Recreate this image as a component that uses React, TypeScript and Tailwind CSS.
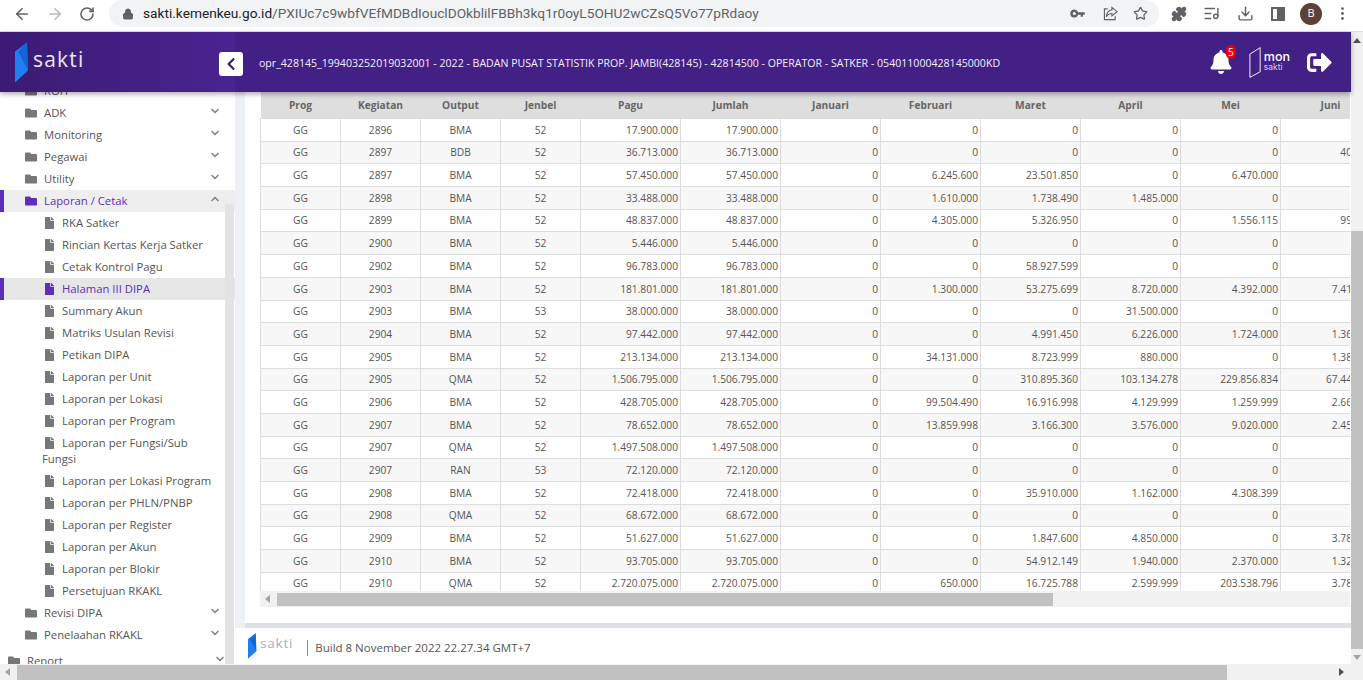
import { ArrowLeft, ArrowRight, RotateCw, Lock, Star, Puzzle, ListMusic, Download, EllipsisVertical, ChevronDown, ChevronUp } from "lucide-react";
import { FaBell, FaFile, FaFolder, FaSignOutAlt, FaChevronLeft } from "react-icons/fa";

type Row = string[];
const raw: Row[] = [
  ["2896","BMA","52","17.900.000","0","0","0","0","0","0"],
  ["2897","BDB","52","36.713.000","0","0","0","0","0","408.000"],
  ["2897","BMA","52","57.450.000","0","6.245.600","23.501.850","0","6.470.000","0"],
  ["2898","BMA","52","33.488.000","0","1.610.000","1.738.490","1.485.000","0","0"],
  ["2899","BMA","52","48.837.000","0","4.305.000","5.326.950","0","1.556.115","990.000"],
  ["2900","BMA","52","5.446.000","0","0","0","0","0","0"],
  ["2902","BMA","52","96.783.000","0","0","58.927.599","0","0","0"],
  ["2903","BMA","52","181.801.000","0","1.300.000","53.275.699","8.720.000","4.392.000","7.410.000"],
  ["2903","BMA","53","38.000.000","0","0","0","31.500.000","0","0"],
  ["2904","BMA","52","97.442.000","0","0","4.991.450","6.226.000","1.724.000","1.360.000"],
  ["2905","BMA","52","213.134.000","0","34.131.000","8.723.999","880.000","0","1.380.000"],
  ["2905","QMA","52","1.506.795.000","0","0","310.895.360","103.134.278","229.856.834","67.440.000"],
  ["2906","BMA","52","428.705.000","0","99.504.490","16.916.998","4.129.999","1.259.999","2.660.000"],
  ["2907","BMA","52","78.652.000","0","13.859.998","3.166.300","3.576.000","9.020.000","2.450.000"],
  ["2907","QMA","52","1.497.508.000","0","0","0","0","0","0"],
  ["2907","RAN","53","72.120.000","0","0","0","0","0","0"],
  ["2908","BMA","52","72.418.000","0","0","35.910.000","1.162.000","4.308.399","0"],
  ["2908","QMA","52","68.672.000","0","0","0","0","0","0"],
  ["2909","BMA","52","51.627.000","0","0","1.847.600","4.850.000","0","3.780.000"],
  ["2910","BMA","52","93.705.000","0","0","54.912.149","1.940.000","2.370.000","1.320.000"],
  ["2910","QMA","52","2.720.075.000","0","650.000","16.725.788","2.599.999","203.538.796","3.780.000"],
];
const heads = ["Prog","Kegiatan","Output","Jenbel","Pagu","Jumlah","Januari","Februari","Maret","April","Mei","Juni"];

function Logo({ className }: { className: string }) {
  return (
    <svg viewBox="0 0 14 40" className={className}>
      <path d="M0 9 L12 0 L13 28 L0 40 Z" fill="#1f7ff0" />
      <path d="M3 9 L12 0 L13 28 Z" fill="#0f5fd0" opacity="0.75" />
    </svg>
  );
}

function Folder({ label, active, open, indent = "pl-[25px] pr-[14px]" }: { label: string; active?: boolean; open?: boolean; indent?: string }) {
  const chevron = "mb-[4px] text-[#888888]";
  return (
    <div className={`relative flex h-[22px] items-center ${indent} ${active ? "bg-[#eeeeee] text-[#5f2eb8]" : "text-[#555555]"}`}>
      {active && <span className="absolute left-0 top-0 h-full w-[4px] bg-[#5f2eb8]" />}
      <FaFolder className={`mr-[7px] h-[12px] w-[12px] shrink-0 ${active ? "text-[#5f2eb8]" : "text-[#777777]"}`} />
      <span className="flex-1 truncate">{label}</span>
      {open ? <ChevronUp size={12} strokeWidth={3.4} className={chevron} /> : <ChevronDown size={12} strokeWidth={3.4} className={chevron} />}
    </div>
  );
}

function Leaf({ label, active }: { label: string; active?: boolean }) {
  return (
    <div className={`relative flex h-[22px] items-center pl-[45px] ${active ? "bg-[#e6e6e6] text-[#5f2eb8]" : "text-[#555555]"}`}>
      {active && <span className="absolute left-0 top-0 h-full w-[4px] bg-[#5f2eb8]" />}
      <FaFile className={`mr-[8px] h-[12px] w-[9px] shrink-0 ${active ? "text-[#5f2eb8]" : "text-[#777777]"}`} />
      <span className="truncate">{label}</span>
    </div>
  );
}

const leavesA = ["RKA Satker","Rincian Kertas Kerja Satker","Cetak Kontrol Pagu"];
const leavesB = ["Summary Akun","Matriks Usulan Revisi","Petikan DIPA","Laporan per Unit","Laporan per Lokasi","Laporan per Program"];
const leavesC = ["Laporan per Lokasi Program","Laporan per PHLN/PNBP","Laporan per Register","Laporan per Akun","Laporan per Blokir","Persetujuan RKAKL"];

export default function App() {
  return (
    <div className="flex h-[680px] w-[1363px] flex-col overflow-hidden bg-white font-['Open_Sans',sans-serif] text-[11.3px]">
      {/* Browser toolbar */}
      <div className="flex h-[32px] shrink-0 items-start border-b border-[#dfe1e5] bg-white text-[#5f6368]">
        <div className="flex h-[27px] items-center">
          <ArrowLeft size={18} strokeWidth={2.2} className="ml-[13px]" />
          <ArrowRight size={18} strokeWidth={2.2} className="ml-[15px] text-[#b8babd]" />
          <RotateCw size={16} strokeWidth={2.4} className="ml-[15px]" />
        </div>
        <div className="ml-[14px] flex h-[27px] w-[1050px] items-center rounded-full bg-[#f1f3f4] pl-[13px] font-['Roboto',sans-serif] text-[13.7px]">
          <Lock size={12} fill="#5f6368" className="mr-[9px]" />
          <span className="flex-1 truncate text-[#5f6368]"><span className="text-[#202124]">sakti.kemenkeu.go.id</span>/PXIUc7c9wbfVEfMDBdIouclDOkblilFBBh3kq1r0oyL5OHU2wCZsQ5Vo77pRdaoy</span>
          <svg viewBox="0 0 16 10" className="mr-[18px] h-[9px] w-[15px]" fill="#5f6368">
            <path fillRule="evenodd" d="M4.5 0.5 A4.5 4.5 0 0 1 8.7 3.5 L16 3.5 L16 6.5 L14 6.5 L14 8.5 L11.5 8.5 L11.5 6.5 L8.7 6.5 A4.5 4.5 0 1 1 4.5 0.5 Z M4.5 3.2 A1.8 1.8 0 1 0 4.5 6.8 A1.8 1.8 0 1 0 4.5 3.2 Z" />
          </svg>
          <svg viewBox="0 0 16 16" className="mr-[15px] h-[15px] w-[15px]" fill="none" stroke="#5f6368" strokeWidth="1.2">
            <path d="M5 3 H1.5 V14.5 H13 V11" />
            <path d="M9.5 1.5 L15 6 L9.5 10.5 V8 C7 8 5 9 3.5 11.5 C4 7.5 6 4.5 9.5 4 Z" />
          </svg>
          <Star size={15} strokeWidth={2} className="mr-[11px]" />
        </div>
        <div className="flex h-[27px] items-center">
          <Puzzle size={16} fill="#5f6368" className="ml-[12px]" />
          <ListMusic size={17} className="ml-[16px]" />
          <Download size={17} className="ml-[17px]" />
          <span className="ml-[17px] flex h-[14px] w-[14px] justify-end border-2 border-[#5f6368]"><span className="h-full w-[6px] bg-[#5f6368]" /></span>
          <span className="ml-[15px] flex h-[22px] w-[22px] items-center justify-center rounded-full bg-[#5d4037] text-[11px] text-white">B</span>
          <EllipsisVertical size={17} className="ml-[12px]" />
        </div>
      </div>

      <div className="flex min-h-0 flex-1">
        <div className="relative flex min-w-0 flex-1 flex-col">
          {/* Header */}
          <div className="z-10 flex h-[60px] shrink-0 items-center bg-[#432086] text-white shadow-[0_2px_5px_rgba(0,0,0,0.35)]">
            <div className="relative flex h-full w-[235px] shrink-0 items-center bg-gradient-to-r from-[#3b1b74] to-[#4a2490] pl-[15px]">
              <Logo className="h-[41px] w-[14px]" />
              <span className="ml-[4px] mb-[5px] text-[21px] tracking-[1.2px] text-[#eae6f4]">sakti</span>
              <button className="absolute left-[219px] top-[20px] flex h-[24px] w-[24px] items-center justify-center rounded-[3px] bg-white text-[#3b1b74]">
                <FaChevronLeft size={14} />
              </button>
            </div>
            <div className="ml-[24px] mt-[3px] flex-1 truncate text-[10.58px] text-[#f2eff8]">
              opr_428145_199403252019032001 - 2022 - BADAN PUSAT STATISTIK PROP. JAMBI(428145) - 42814500 - OPERATOR - SATKER - 054011000428145000KD
            </div>
            <div className="relative mr-[16px]">
              <FaBell size={24} />
              <span className="absolute -right-[3px] -top-[5px] flex h-[14px] w-[10px] items-center justify-center rounded-full bg-[#e60012] text-[10px] leading-none">5</span>
            </div>
            <svg viewBox="0 0 14 34" className="mr-[2px] h-[33px] w-[13px]" fill="none" stroke="white" strokeWidth="1">
              <path d="M1 8 L12 1 L12 27 L1 33 Z" />
            </svg>
            <div className="mr-[17px] flex flex-col font-['Inter',sans-serif] leading-[10px]">
              <span className="text-[12.5px] font-medium">mon</span>
              <span className="text-[8.5px] text-[#d7cfe8]">sakti</span>
            </div>
            <FaSignOutAlt size={25} className="mr-[19px]" />
          </div>

          <div className="flex min-h-0 flex-1">
            {/* Sidebar */}
            <div className="relative w-[235px] shrink-0 overflow-hidden bg-white">
              <div className="-mt-[12px]">
                <Folder label="KOH" />
                <Folder label="ADK" />
                <Folder label="Monitoring" />
                <Folder label="Pegawai" />
                <Folder label="Utility" />
                <Folder label="Laporan / Cetak" active open />
                {leavesA.map((l) => <Leaf key={l} label={l} />)}
                <Leaf label="Halaman III DIPA" active />
                {leavesB.map((l) => <Leaf key={l} label={l} />)}
                <div className="relative h-[38px] pl-[42px] pt-[3px] leading-[16px] text-[#555555]">
                  <FaFile className="absolute left-[45px] top-[5px] h-[12px] w-[9px] text-[#777777]" />
                  <div className="pl-[20px]">Laporan per Fungsi/Sub</div>
                  <div>Fungsi</div>
                </div>
                {leavesC.map((l) => <Leaf key={l} label={l} />)}
                <Folder label="Revisi DIPA" />
                <Folder label="Penelaahan RKAKL" />
                <div className="mt-[4px]">
                  <Folder label="Report" indent="pl-[8px] pr-[9px]" />
                </div>
              </div>
              <div className="absolute bottom-0 right-[1px] top-[112px] w-[9px] rounded-t-[3px] bg-[#e3e3e3]" />
            </div>

            {/* Main */}
            <div className="flex min-w-0 flex-1 flex-col bg-[#edf1f5]">
              <div className="min-h-0 flex-1 pl-[10px]">
                <div className="h-[531px] bg-white pl-[15px]">
                  <div className="mr-[1px] h-[499px] overflow-hidden">
                    <table className="w-[1120px] table-fixed border-collapse text-[10.2px] text-[#555555]">
                      <colgroup>
                        <col className="w-[80px]" /><col className="w-[80px]" /><col className="w-[80px]" /><col className="w-[80px]" />
                        <col className="w-[100px]" /><col className="w-[100px]" /><col className="w-[100px]" /><col className="w-[100px]" />
                        <col className="w-[100px]" /><col className="w-[100px]" /><col className="w-[100px]" /><col className="w-[100px]" />
                      </colgroup>
                      <thead>
                        <tr className="h-[26.5px] bg-[#dedede] text-[#666666]">
                          {heads.map((h) => <th key={h} className="p-0 pt-[1px] text-center font-bold">{h}</th>)}
                        </tr>
                      </thead>
                      <tbody>
                        {raw.map((r, i) => (
                          <tr key={i} className={`h-[22.7px] ${i % 2 ? "bg-[#f7f7f7]" : "bg-white"}`}>
                            <td className="border border-[#dddddd] p-0 pt-[1px] text-center">GG</td>
                            <td className="border border-[#dddddd] p-0 pt-[1px] text-center">{r[0]}</td>
                            <td className="border border-[#dddddd] p-0 pt-[1px] text-center">{r[1]}</td>
                            <td className="border border-[#dddddd] p-0 pt-[1px] text-center">{r[2]}</td>
                            <td className="border border-[#dddddd] p-0 pr-[2px] pt-[1px] text-right">{r[3]}</td>
                            <td className="border border-[#dddddd] p-0 pr-[2px] pt-[1px] text-right">{r[3]}</td>
                            {r.slice(4).map((v, j) => (
                              <td key={j} className="border border-[#dddddd] p-0 pr-[2px] pt-[1px] text-right">{v}</td>
                            ))}
                          </tr>
                        ))}
                      </tbody>
                    </table>
                  </div>
                  {/* inner horizontal scrollbar */}
                  <div className="mr-[1px] flex h-[16px] items-center bg-[#f1f1f1]">
                    <span className="ml-[5px] mr-[6px] h-0 w-0 border-y-[4px] border-r-[5px] border-y-transparent border-r-[#a3a3a3]" />
                    <div className="ml-[1px] h-[13px] w-[776px] bg-[#c1c1c1]" />
                  </div>
                </div>
                <div className="h-[5px] bg-[#dde1e6]" />
              </div>
              {/* Footer */}
              <div className="flex h-[36px] shrink-0 items-center bg-white pl-[13px] text-[11.5px] text-[#555555]">
                <Logo className="h-[26px] w-[9px]" />
                <span className="mb-[5px] ml-[3px] text-[13.5px] tracking-[0.8px] text-[#a8b0bc]">sakti</span>
                <span className="ml-[14px] mr-[7px] mt-[3px] h-[16px] w-px bg-[#888888]" />
                <span className="mt-[3px]">Build 8 November 2022 22.27.34 GMT+7</span>
              </div>
            </div>
          </div>
        </div>

        {/* Right page scrollbar */}
        <div className="flex w-[12px] shrink-0 flex-col bg-[#f1f1f1]">
          <span className="mx-auto mt-[6px] h-0 w-0 border-x-[4px] border-b-[5px] border-x-transparent border-b-[#505050]" />
          <div className="mt-[188px] h-[418px] w-full bg-[#c1c1c1]" />
          <span className="mx-auto mt-[6px] h-0 w-0 border-x-[4px] border-t-[5px] border-x-transparent border-t-[#a3a3a3]" />
        </div>
      </div>

      {/* Bottom page scrollbar */}
      <div className="flex h-[16px] shrink-0 items-center bg-[#f1f1f1]">
        <span className="ml-[5px] h-0 w-0 border-y-[4px] border-r-[5px] border-y-transparent border-r-[#a3a3a3]" />
        <div className="ml-[7px] h-[15px] w-[1210px] bg-[#c1c1c1]" />
        <span className="ml-[112px] h-0 w-0 border-y-[4px] border-l-[5px] border-y-transparent border-l-[#505050]" />
      </div>
    </div>
  );
}
